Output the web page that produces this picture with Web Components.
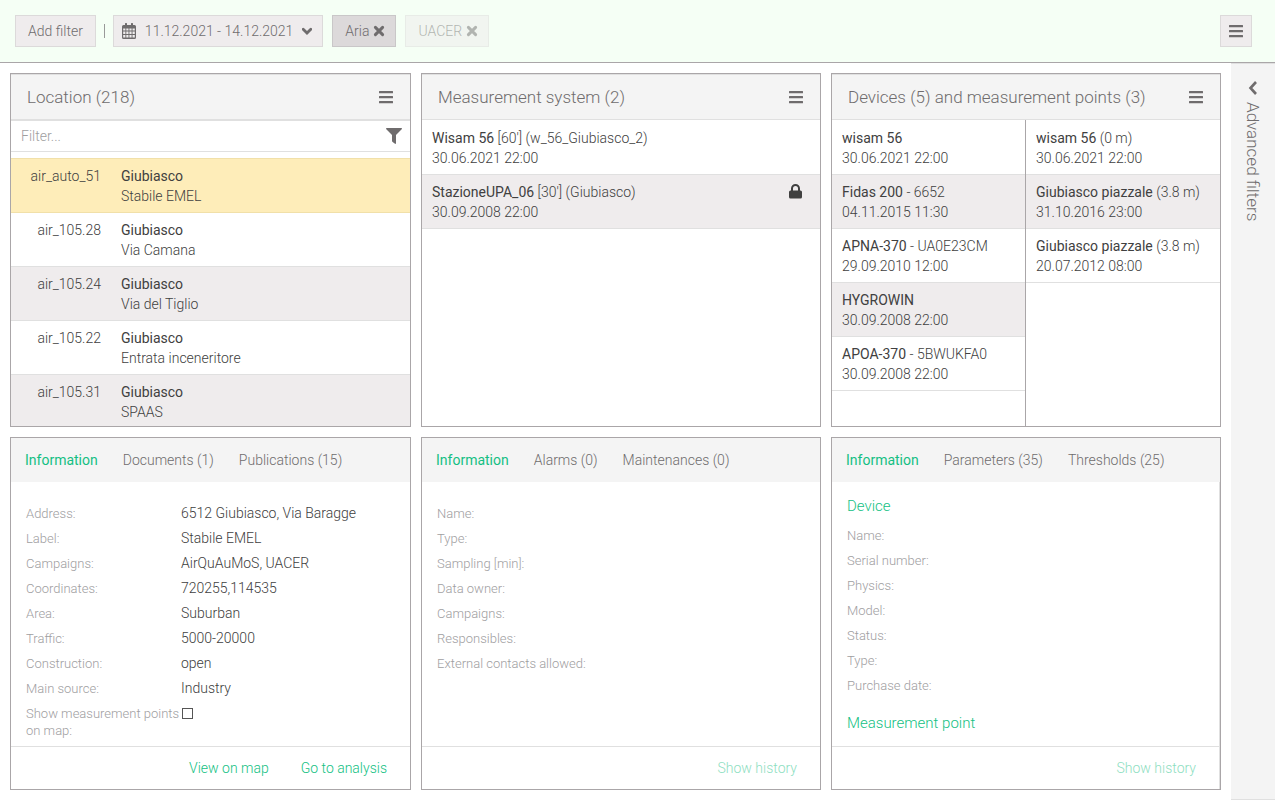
<!DOCTYPE html>
<html lang="en">
<head>
<meta charset="utf-8">
<title>Locations</title>
<meta name="viewport" content="width=device-width, initial-scale=1">
<style>
  html, body { margin: 0; height: 100%; }
  body {
    font: 300 14px/20px Roboto, "Open Sans", sans-serif;
    color: #404040;
    background: #fff;
    --line: #e0e0e0;
    --frame: #aaa6a8;
    --soft: #f4f4f4;
    --stripe: #efeced;
    --muted: #6f6c6d;
    --accent: #13bf83;
  }
</style>
</head>
<body>
<app-shell>
  <tool-bar slot="top">
    <tool-button>Add filter</tool-button>
    <tool-separator></tool-separator>
    <tool-button icon="calendar" trail="chevron">11.12.2021 - 14.12.2021</tool-button>
    <tool-button kind="active" trail="close">Aria</tool-button>
    <tool-button kind="faded" trail="close">UACER</tool-button>
    <tool-button slot="end" kind="square" icon="bars" label="Menu"></tool-button>
  </tool-bar>

  <data-panel heading="Location (218)" filter>
    <entry-list>
      <entry-row code="air_auto_51" name="Giubiasco" selected>Stabile EMEL</entry-row>
      <entry-row code="air_105.28" name="Giubiasco">Via Camana</entry-row>
      <entry-row code="air_105.24" name="Giubiasco" striped>Via del Tiglio</entry-row>
      <entry-row code="air_105.22" name="Giubiasco">Entrata inceneritore</entry-row>
      <entry-row code="air_105.31" name="Giubiasco" striped>SPAAS</entry-row>
    </entry-list>
  </data-panel>

  <data-panel heading="Measurement system (2)">
    <entry-list>
      <entry-row name="Wisam 56" detail="[60'] (w_56_Giubiasco_2)">30.06.2021 22:00</entry-row>
      <entry-row name="StazioneUPA_06" detail="[30'] (Giubiasco)" striped locked>30.09.2008 22:00</entry-row>
    </entry-list>
  </data-panel>

  <data-panel heading="Devices (5) and measurement points (3)">
    <entry-list divided>
      <entry-row name="wisam 56">30.06.2021 22:00</entry-row>
      <entry-row name="Fidas 200" detail="- 6652" striped>04.11.2015 11:30</entry-row>
      <entry-row name="APNA-370" detail="- UA0E23CM">29.09.2010 12:00</entry-row>
      <entry-row name="HYGROWIN" striped>30.09.2008 22:00</entry-row>
      <entry-row name="APOA-370" detail="- 5BWUKFA0">30.09.2008 22:00</entry-row>
    </entry-list>
    <entry-list>
      <entry-row name="wisam 56" detail="(0 m)">30.06.2021 22:00</entry-row>
      <entry-row name="Giubiasco piazzale" detail="(3.8 m)" striped>31.10.2016 23:00</entry-row>
      <entry-row name="Giubiasco piazzale" detail="(3.8 m)">20.07.2012 08:00</entry-row>
    </entry-list>
  </data-panel>

  <tab-panel tabs="Information|Documents (1)|Publications (15)">
    <info-group>
      <info-field label="Address:">6512 Giubiasco, Via Baragge</info-field>
      <info-field label="Label:">Stabile EMEL</info-field>
      <info-field label="Campaigns:">AirQuAuMoS, UACER</info-field>
      <info-field label="Coordinates:">720255,114535</info-field>
      <info-field label="Area:">Suburban</info-field>
      <info-field label="Traffic:">5000-20000</info-field>
      <info-field label="Construction:">open</info-field>
      <info-field label="Main source:">Industry</info-field>
      <info-field label="Show measurement points on map:" check></info-field>
    </info-group>
    <text-action slot="actions">View on map</text-action>
    <text-action slot="actions">Go to analysis</text-action>
  </tab-panel>

  <tab-panel tabs="Information|Alarms (0)|Maintenances (0)">
    <info-group>
      <info-field label="Name:"></info-field>
      <info-field label="Type:"></info-field>
      <info-field label="Sampling [min]:"></info-field>
      <info-field label="Data owner:"></info-field>
      <info-field label="Campaigns:"></info-field>
      <info-field label="Responsibles:"></info-field>
      <info-field label="External contacts allowed:"></info-field>
    </info-group>
    <text-action slot="actions" disabled>Show history</text-action>
  </tab-panel>

  <tab-panel tabs="Information|Parameters (35)|Thresholds (25)" railed>
    <info-group heading="Device">
      <info-field label="Name:"></info-field>
      <info-field label="Serial number:"></info-field>
      <info-field label="Physics:"></info-field>
      <info-field label="Model:"></info-field>
      <info-field label="Status:"></info-field>
      <info-field label="Type:"></info-field>
      <info-field label="Purchase date:"></info-field>
    </info-group>
    <info-group heading="Measurement point"></info-group>
    <text-action slot="actions" disabled>Show history</text-action>
  </tab-panel>

  <side-drawer slot="side">Advanced filters</side-drawer>
</app-shell>

<script>
const ICONS = {
  bars: ['14 16', '<path d="M.5 2h13q.5 0 .5.500v1.200q0 .5-.5.500H.5Q0 4.200 0 3.700V2.500Q0 2 .5 2zM.5 7h13q.5 0 .5.500v1.200q0 .5-.5.500H.5Q0 9.200 0 8.700V7.500Q0 7 .5 7zM.5 12h13q.5 0 .5.500v1.200q0 .5-.5.500H.5q-.5 0-.5-.5v-1.200Q0 12 .5 12z"/>'],
  calendar: ['14 16', '<path fill-rule="evenodd" d="M1.500 2H3V.6Q3 0 3.600 0H4.400Q5 0 5 .6V2H9V.6Q9 0 9.600 0H10.400Q11 0 11 .6V2H12.500Q14 2 14 3.500V14.500Q14 16 12.500 16H1.500Q0 16 0 14.500V3.500Q0 2 1.500 2zM1.200 5.400v2.200h2.200V5.400zM4.300 5.400v2.200h2.200V5.400zM7.400 5.400v2.200h2.200V5.400zM10.500 5.400v2.200h2.300V5.400zM1.200 8.600v2.400h2.200V8.600zM4.300 8.600v2.400h2.200V8.600zM7.400 8.600v2.400h2.200V8.600zM10.500 8.600v2.400h2.300V8.600zM1.200 12v2.600h2.200V12zM4.300 12v2.600h2.200V12zM7.400 12v2.600h2.200V12zM10.500 12v2.600h2.300V12z"/>'],
  chevron: ['10 14', '<path d="M1.200 5.200L5 9l3.800-3.800" fill="none" stroke="currentColor" stroke-width="2.800" stroke-linecap="round"/>'],
  left: ['10 14', '<path d="M8 1L2.500 7 8 13" fill="none" stroke="currentColor" stroke-width="2.600"/>'],
  close: ['12 14', '<path d="M2.400 3.400l7.200 7.200M9.600 3.400l-7.200 7.200" fill="none" stroke="currentColor" stroke-width="3" stroke-linecap="round"/>'],
  funnel: ['16 16', '<path d="M.5 0h15q.8.6.2 1.200L10 7v8.200q-.2.900-1 .6L6.300 13.800 6 13V7L.3 1.200Q-.2.500.5 0z"/>'],
  lock: ['13 15', '<path fill-rule="evenodd" d="M2 6.500V4.500a4.500 4.500 0 0 1 9 0v2h.5Q13 6.500 13 8v5q0 1.500-1.500 1.500h-10Q0 14.500 0 13V8q0-1.500 1.500-1.500zM4 6.500h5v-2a2.500 2.500 0 0 0-5 0z"/>']
};
function icon(name) {
  if (!name) return '';
  const [size, body] = ICONS[name];
  const [w, h] = size.split(' ');
  return `<svg width="${w}" height="${h}" viewBox="0 0 ${size}" fill="currentColor" aria-hidden="true">${body}</svg>`;
}
const BASE = `*, ::before, ::after { box-sizing: border-box; }
  :host { box-sizing: border-box; }
  button, input { font: inherit; color: inherit; letter-spacing: inherit; }
  button { margin: 0; padding: 0; border: 0; background: none; cursor: pointer; }
  svg { display: block; flex: none; }`;

function define(tag, css, markup) {
  customElements.define(tag, class extends HTMLElement {
    constructor() {
      super();
      this.attachShadow({ mode: 'open' });
    }
    connectedCallback() {
      const html = typeof markup === 'function' ? markup(this) : markup;
      this.shadowRoot.innerHTML = `<style>${BASE}${css}</style>${html}`;
    }
  });
}
const attr = (el, name) => el.getAttribute(name) || '';

define('app-shell', `
  :host { display: grid; grid-template: auto 1fr / 1fr auto; min-height: 100vh; height: 100vh; }
  .top { grid-column: 1 / -1; }
  main { display: grid; grid-template-columns: 401fr 400fr 390fr;
    grid-template-rows: repeat(2, minmax(240px, 1fr)); gap: 10px; padding: 10px; min-height: 0; min-width: 0; }
`, `<div class="top"><slot name="top"></slot></div><main><slot></slot></main><slot name="side"></slot>`);

define('tool-bar', `
  :host { display: block; }
  header { display: flex; align-items: center; justify-content: space-between;
    padding: 15px 23px 15px 15px; background: #f5fff5; border-bottom: 1px solid var(--frame); }
  div { display: flex; align-items: center; gap: 9px; }
`, `<header><div><slot></slot></div><slot name="end"></slot></header>`);

define('tool-separator', `
  :host { display: block; width: 1px; height: 14px; margin: 0 -1px; background: #999; }
`, '');

define('tool-button', `
  :host { display: block; color: var(--muted); }
  button { display: flex; align-items: center; height: 32px; padding: 0 12px; gap: 4px;
    background: var(--stripe); border: 1px solid #dcdada; white-space: nowrap; }
  .active, .faded { padding-right: 10px; }
  .iconic { padding: 0 10px 0 8px; gap: 9px; }
  .active { background: #dcd9da; border-color: #c9c7c8; }
  .faded { opacity: .5; }
  .square { width: 32px; padding: 0; justify-content: center; }
`, el => {
  const kind = attr(el, 'kind') || (el.hasAttribute('icon') ? 'iconic' : '');
  return `<button type="button" class="${kind}" aria-label="${attr(el, 'label') || el.textContent}">${icon(attr(el, 'icon'))}${kind === 'square' ? '' : '<slot></slot>'}${icon(attr(el, 'trail'))}</button>`;
});

define('data-panel', `
  :host { display: flex; flex-direction: column; min-height: 0; min-width: 0;
    border: 1px solid var(--frame); background: #fff; }
  header { display: flex; align-items: center; justify-content: space-between; height: 46px; flex: none;
    padding: 0 17px 0 16px; background: var(--soft); color: var(--muted);
    border-top: 1px solid var(--line); border-bottom: 1px solid var(--line); }
  h2 { margin: 0; font-size: 17px; font-weight: 300; line-height: 24px; white-space: nowrap; }
  label { display: flex; align-items: center; height: 32px; flex: none; margin-bottom: 6px; padding: 0 8px 0 10px;
    border-top: 1px solid var(--line); border-bottom: 1px solid var(--line); color: var(--muted); }
  input { flex: 1; min-width: 0; padding: 0; border: 0; outline: 0; background: none; }
  input::placeholder { color: #a09e9f; opacity: 1; }
  .body { display: flex; flex: 1; min-height: 0; overflow: hidden; }
`, el => `<header><h2>${attr(el, 'heading')}</h2><button type="button" aria-label="Panel menu">${icon('bars')}</button></header>
  ${el.hasAttribute('filter') ? `<label><input type="text" placeholder="Filter..." aria-label="Filter">${icon('funnel')}</label>` : ''}
  <div class="body"><slot></slot></div>`);

define('entry-list', `
  :host { display: block; flex: 1 1 50%; min-width: 0; padding-top: 1px; }
  :host([divided]) { border-right: 1px solid var(--frame); }
`, `<slot></slot>`);

define('entry-row', `
  :host { display: flex; gap: 20px; height: 54px; padding: 7px 18px 6px 10px; border-bottom: 1px solid var(--line); white-space: nowrap; }
  :host([striped]) { background: var(--stripe); }
  :host([selected]) { background: #feedb9; border-top: 1px solid #f1e0a9; border-bottom-color: #f1e0a9; margin-top: -1px; height: 55px; }
  .code { width: 80px; text-align: right; flex: none; }
  .text { flex: 1; min-width: 0; }
  b { font-weight: 400; }
  svg { margin-top: 2px; }
`, el => `${attr(el, 'code') ? `<span class="code">${attr(el, 'code')}</span>` : ''}
  <div class="text"><div><b>${attr(el, 'name')}</b> ${attr(el, 'detail')}</div><div><slot></slot></div></div>
  ${el.hasAttribute('locked') ? icon('lock') : ''}`);

define('tab-panel', `
  :host { display: flex; flex-direction: column; min-height: 0; min-width: 0;
    border: 1px solid var(--frame); background: #fff; }
  nav { display: flex; align-items: center; gap: 25px; height: 44px; flex: none; padding: 0 14px;
    background: var(--soft); color: var(--muted); white-space: nowrap; }
  nav button[aria-selected=true] { color: var(--accent); font-weight: 400; }
  .body { flex: 1; min-height: 0; overflow: hidden; padding: 0 15px; }
  :host([railed]) .body, :host([railed]) footer { border-right: 1px solid var(--line); }
  footer { display: flex; justify-content: flex-end; align-items: center; gap: 32px; height: 43px; flex: none;
    padding: 0 23px; border-top: 1px solid var(--line); }
`, el => `<nav role="tablist">${attr(el, 'tabs').split('|').map((t, i) => `<button type="button" role="tab" aria-selected="${i === 0}">${t}</button>`).join('')}</nav>
  <div class="body"><slot></slot></div><footer><slot name="actions"></slot></footer>`);

define('text-action', `
  :host { display: block; color: var(--accent); }
  button:disabled { opacity: .5; cursor: default; }
`, el => `<button type="button" ${el.hasAttribute('disabled') ? 'disabled' : ''}><slot></slot></button>`);

define('info-group', `
  :host { display: block; padding: 19px 0 1px; }
  :host([heading]) { padding-top: 14px; }
  h3 { margin: 0 0 7px; font-size: 15px; font-weight: 300; line-height: 20px; color: var(--accent); }
`, el => `${attr(el, 'heading') ? `<h3>${attr(el, 'heading')}</h3>` : ''}<slot></slot>`);

define('info-field', `
  :host { display: flex; align-items: flex-start; padding: 4px 0; line-height: 17px; }
  label { width: 155px; flex: none; font-size: 13px; color: #a09e9f; }
  :host(:empty:not([check])) label { width: auto; }
  input { appearance: none; width: 11px; height: 11px; margin: 3px 0 0 1px; border: 1px solid #555; background: #fff; }
`, el => el.hasAttribute('check')
  ? `<label for="box">${attr(el, 'label')}</label><input id="box" type="checkbox">`
  : `<label>${attr(el, 'label')}</label><slot></slot>`);

define('side-drawer', `
  :host { display: block; }
  button { display: flex; flex-direction: column; align-items: center; gap: 7px; width: 44px; height: 100%;
    padding-top: 17px; background: var(--soft); color: var(--muted); border-top: 1px solid var(--line);
    border-bottom: 1px solid var(--line); font-size: 17px; }
  span { writing-mode: vertical-rl; }
`, `<button type="button">${icon('left')}<span><slot></slot></span></button>`);
</script>
</body>
</html>
